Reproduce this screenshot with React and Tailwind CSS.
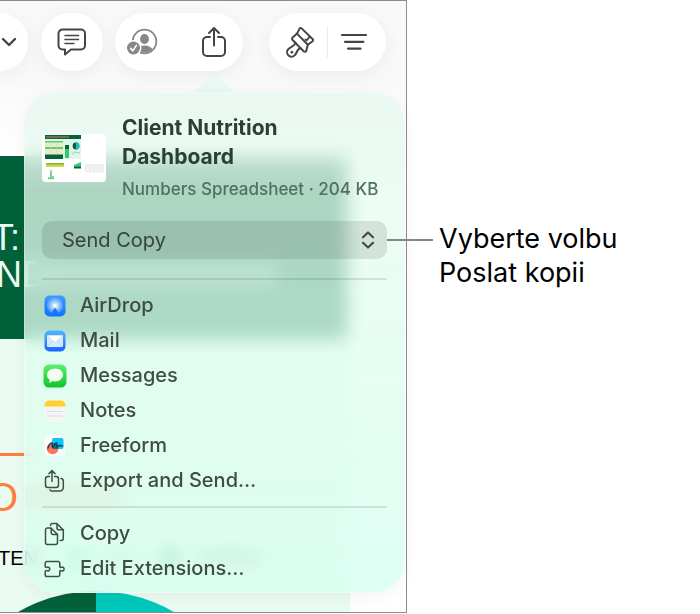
import React from "react";

const stroke = {
  fill: "none",
  stroke: "currentColor",
  strokeLinecap: "round",
  strokeLinejoin: "round",
};

function ChevronIcon() {
  return (
    <svg width="16" height="10" viewBox="0 0 16 10" {...stroke} strokeWidth="2.4">
      <path d="M2 2 L8 8 L14 2" />
    </svg>
  );
}

function CommentIcon() {
  return (
    <svg width="32" height="30" viewBox="0 0 32 30" {...stroke} strokeWidth="2">
      <path d="M6.5 2.5 H25 A4 4 0 0 1 29 6.5 V18.5 A4 4 0 0 1 25 22.5 H15 L9 27.5 V22.5 H6.5 A4 4 0 0 1 2.5 18.5 V6.5 A4 4 0 0 1 6.5 2.5 Z" />
      <path strokeWidth="1.5" d="M9 8.5 H22.5 M9 12.5 H22.5 M9 16.5 H18" />
    </svg>
  );
}

function CollaborateIcon() {
  return (
    <svg width="32" height="28" viewBox="0 0 32 28">
      <clipPath id="person">
        <circle cx="18.5" cy="13.5" r="11" />
      </clipPath>
      <circle cx="18.5" cy="13.5" r="11.8" fill="none" stroke="#86868b" strokeWidth="1.8" />
      <g clipPath="url(#person)" fill="#86868b">
        <ellipse cx="18.5" cy="11" rx="4.4" ry="5" />
        <ellipse cx="18.5" cy="25" rx="9.5" ry="7.5" />
      </g>
      <circle cx="7.5" cy="20" r="8" fill="#fff" />
      <circle cx="7.5" cy="20" r="6.5" fill="#86868b" />
      <path d="M4.6 20.4 L6.8 22.8 L10.4 17.4" fill="none" stroke="#fff" strokeWidth="1.6" strokeLinecap="round" strokeLinejoin="round" />
    </svg>
  );
}

function ShareIcon() {
  return (
    <svg width="26" height="32" viewBox="0 0 26 32" {...stroke} strokeWidth="2">
      <path d="M9 11 H6 A4 4 0 0 0 2 15 V26 A4 4 0 0 0 6 30 H20 A4 4 0 0 0 24 26 V15 A4 4 0 0 0 20 11 H17" />
      <path d="M13 19.5 V2.5 M8 7 L13 2 L18 7" />
    </svg>
  );
}

function BrushIcon() {
  return (
    <svg width="30" height="32" viewBox="0 0 30 32" {...stroke} strokeWidth="2">
      <path d="M16.5 1.8 L28.3 13.6 L24 18.2 L12.2 6.4 Z" stroke="none" />
      <path d="M12 7.6 L14.6 2.6 A1.2 1.2 0 0 1 16.6 2.4 L27.8 13.2 A1.4 1.4 0 0 1 27.6 15.2 L22.8 18.8" />
      <path d="M24.8 10.6 L21.6 14.4 L20.4 13.6" strokeWidth="1.8" />
      <path d="M12 7.6 L7.6 11.4 A1.8 1.8 0 0 0 7.6 14 L18.6 25.2 A1.8 1.8 0 0 0 21.2 25 L22.8 18.8 Z" />
      <path d="M10.4 16.8 C10 20 6 20.2 3.4 23 A4.4 4.4 0 0 0 9.6 29.4 C12.6 26.6 11.6 22.8 15.6 22.2" />
      <circle cx="6.8" cy="26.2" r="1" fill="currentColor" strokeWidth="1" />
    </svg>
  );
}

function FilterIcon() {
  return (
    <svg width="28" height="18" viewBox="0 0 28 18" {...stroke} strokeWidth="2.2">
      <path d="M2 2 H26 M5 8.8 H23.4 M8 15.6 H20.6" />
    </svg>
  );
}

function AirDropIcon() {
  return (
    <svg width="22" height="22" viewBox="0 0 22 22">
      <defs>
        <linearGradient id="airdrop" x1="0" y1="0" x2="0" y2="1">
          <stop offset="0" stopColor="#3f9bff" />
          <stop offset="1" stopColor="#0a74ff" />
        </linearGradient>
      </defs>
      <rect x="0.5" y="0.5" width="21" height="21" rx="5" fill="url(#airdrop)" />
      <circle cx="11" cy="10.8" r="7.8" fill="#fff" opacity=".3" />
      <circle cx="11" cy="10.8" r="5.4" fill="#fff" opacity=".35" />
      <circle cx="11" cy="10.8" r="3.2" fill="#fff" opacity=".4" />
      <path d="M11 12.5 L6.5 19.4 H15.5 Z" fill="#137aff" />
      <circle cx="11" cy="10.8" r="1.8" fill="#fff" />
    </svg>
  );
}

function MailIcon() {
  return (
    <svg width="22" height="22" viewBox="0 0 22 22">
      <defs>
        <linearGradient id="mail" x1="0" y1="0" x2="0" y2="1">
          <stop offset="0" stopColor="#4fb8fb" />
          <stop offset="1" stopColor="#1a63ff" />
        </linearGradient>
      </defs>
      <rect x="0.5" y="0.5" width="21" height="21" rx="5" fill="url(#mail)" />
      <rect x="3" y="5" width="16" height="12" rx="1.6" fill="#d9eaff" />
      <path d="M3.4 16.6 L9 10.8 M18.6 16.6 L13 10.8" stroke="#b3d2f8" strokeWidth="0.8" />
      <path d="M3.2 5.4 L9.6 11.6 Q11 12.8 12.4 11.6 L18.8 5.4 Z" fill="#fff" stroke="#b3d2f8" strokeWidth=".6" />
    </svg>
  );
}

function MessagesIcon() {
  return (
    <svg width="24" height="24" viewBox="0 0 24 24">
      <defs>
        <linearGradient id="messages" x1="0" y1="0" x2="0" y2="1">
          <stop offset="0" stopColor="#5cf06c" />
          <stop offset="1" stopColor="#12c22c" />
        </linearGradient>
      </defs>
      <rect x="0.5" y="0.5" width="23" height="23" rx="5.5" fill="url(#messages)" />
      <path d="M12 4.6 C16.6 4.6 20 7.4 20 11 C20 14.6 16.6 17.4 12 17.4 C11 17.4 10 17.3 9.2 17 C8.4 17.9 7.2 18.6 5.8 18.7 C6.5 17.8 6.8 16.8 6.7 15.8 C5 14.7 4 13 4 11 C4 7.4 7.4 4.6 12 4.6 Z" fill="#f3fff3" />
    </svg>
  );
}

function NotesIcon() {
  return (
    <svg width="22" height="22" viewBox="0 0 22 22">
      <clipPath id="notes">
        <rect x="0.5" y="0.5" width="21" height="21" rx="5" />
      </clipPath>
      <g clipPath="url(#notes)">
        <rect width="22" height="22" fill="#f5f5f6" />
        <rect width="22" height="6.5" fill="#ffd02f" />
        <path d="M3 11.5 H19 M3 16 H19" stroke="#dcdcdf" strokeWidth="1" />
      </g>
    </svg>
  );
}

function FreeformIcon() {
  return (
    <svg width="22" height="22" viewBox="0 0 22 22">
      <rect x="0.5" y="0.5" width="21" height="21" rx="5" fill="#fbfbfb" />
      <rect x="8" y="3" width="11.5" height="11" rx="2" fill="#12c3f5" />
      <circle cx="8.6" cy="13.4" r="5.8" fill="#ff7350" />
      <path d="M8 8 H11 A6 6 0 0 1 14.2 14 H10 A2 2 0 0 1 8 12 Z" fill="#0b6f94" />
      <path d="M3.8 13.2 C6 7 8.8 6.6 8.2 9.8 C7.6 13.4 9.6 12.6 11 9.4 C12.6 6.6 13.4 8 12.8 10.6 C12.6 13 14.4 11.8 15.4 10.2 C16.4 9.6 16.4 12 18.6 10.8" {...stroke} stroke="#073b55" strokeWidth="1.3" />
    </svg>
  );
}

function ExportIcon() {
  return (
    <svg width="22" height="24" viewBox="0 0 22 24" {...stroke} strokeWidth="1.5">
      <path d="M5.5 7.5 H4 A2.5 2.5 0 0 0 1.5 10 V16 A2.5 2.5 0 0 0 4 18.5 H12 A2.5 2.5 0 0 0 14.5 16 V10 A2.5 2.5 0 0 0 12 7.5 H10.5" />
      <path d="M8 12.5 V2 M5 4.6 L8 1.6 L11 4.6" />
      <path d="M17 9.5 A2.5 2.5 0 0 1 19.3 12 V18.5 A3.5 3.5 0 0 1 15.8 22 H8.5 A2.5 2.5 0 0 1 6 20.8" />
    </svg>
  );
}

function CopyIcon() {
  return (
    <svg width="22" height="24" viewBox="0 0 22 24" {...stroke} strokeWidth="1.5">
      <path d="M3.500 6 H7 L13.500 12.500 V20.500 A2 2 0 0 1 11.500 22.500 H3.500 A2 2 0 0 1 1.500 20.500 V8 A2 2 0 0 1 3.500 6 Z" />
      <path d="M7.2 6.4 V10.6 A1.8 1.8 0 0 0 9 12.4 H13.2" />
      <path d="M6.5 3.4 A2 2 0 0 1 8.3 1.5 H12.8 L19.3 8 V16.5 A2 2 0 0 1 17.3 18.5 H16.2" />
      <path d="M13 1.8 V6 A1.8 1.8 0 0 0 14.8 7.8 H19" />
    </svg>
  );
}

function ExtensionIcon() {
  return (
    <svg width="22" height="18" viewBox="0 0 22 18" {...stroke} strokeWidth="1.5">
      <path d="M3 1.5 H14 A1.8 1.8 0 0 1 15.8 3.3 V6.4 C15.8 7.8 17 7.6 17.6 7.2 A1.900 1.900 0 1 1 17.600 10.800 C17 10.400 15.800 10.200 15.800 11.600 V14.7 A1.8 1.8 0 0 1 14 16.5 H3 A1.8 1.8 0 0 1 1.2 14.7 V11.8 C1.2 10.400 2.400 10.400 3.200 10.800 A1.900 1.900 0 1 0 3.200 7.200 C2.400 7.600 1.200 7.600 1.200 6.200 V3.3 A1.8 1.8 0 0 1 3 1.5 Z" />
    </svg>
  );
}

function Thumbnail() {
  return (
    <svg width="64" height="48" viewBox="0 0 64 48" className="shrink-0 rounded bg-white">
      <rect x="3" y="1" width="36" height="24" fill="#dff5e8" />
      <rect x="3" y="1" width="36" height="4" fill="#06623c" />
      <path d="M4 3 H27" stroke="#d9824a" strokeWidth="1" />
      <rect x="3" y="7" width="18" height="6" fill="#ece9c4" />
      <rect x="3" y="13" width="18" height="2" fill="#4fd37b" />
      <rect x="3" y="15" width="18" height="5" fill="#ece9c4" />
      <rect x="3" y="7" width="18" height="1.5" fill="#4fd37b" />
      <rect x="3" y="20.500" width="18" height="4.500" fill="#06623c" />
      <path d="M9 9 V20 M15 9 V20" stroke="#bfe0bf" strokeWidth=".6" />
      <rect x="23" y="11" width="4" height="13" fill="#35c96a" />
      <rect x="23" y="11" width="4" height="4" fill="#06623c" />
      <circle cx="34" cy="12" r="3.4" fill="#06623c" />
      <path d="M34 8.6 A3.4 3.4 0 0 1 34 15.4 Z" fill="#17c6ba" />
      <path d="M30 20 L33 18 L38 19" stroke="#7bcf9b" strokeWidth=".8" fill="none" />
      <rect x="4" y="29" width="18" height="4" fill="#d8d845" />
      <path d="M4 29.8 H22" stroke="#56b93d" strokeWidth="1.2" />
      <path d="M32 34 V31 L39 28 V34 Z" fill="#37d07a" />
      <rect x="32" y="32.5" width="7" height="2" fill="#06623c" />
      <path d="M7 36 H11 M6 45 H12" stroke="#bfbfbf" strokeWidth=".7" />
      <path d="M9 37 V45 M11 42 V45 M7 43 V45" stroke="#2fc352" strokeWidth="1.3" />
      <rect x="43" y="30" width="19" height="8.5" fill="#ededee" />
      <path d="M46 31 V38 M50 31 V38 M54 31 V38 M58 31 V38 M51 29 H54" stroke="#fff" strokeWidth=".7" />
    </svg>
  );
}

const apps = [
  ["AirDrop", AirDropIcon],
  ["Mail", MailIcon],
  ["Messages", MessagesIcon],
  ["Notes", NotesIcon],
  ["Freeform", FreeformIcon],
  ["Export and Send…", ExportIcon],
];

const actions = [
  ["Copy", CopyIcon],
  ["Edit Extensions…", ExtensionIcon],
];

function ActionList({ items }) {
  return (
    <ul>
      {items.map(([label, Icon]) => (
        <li key={label}>
          <button type="button" className="flex h-[35px] w-full items-center gap-3 text-left font-medium">
            <span className="flex w-[26px] shrink-0 justify-center">
              <Icon />
            </span>
            {label}
          </button>
        </li>
      ))}
    </ul>
  );
}

function Toolbar() {
  const pill = "flex h-[58px] items-center bg-white shadow-[0_4px_20px_rgba(0,0,0,0.06)]";
  return (
    <header className="flex h-[155px] items-start bg-linear-to-b from-[#f9f9f9] from-50% to-white pt-3 text-[#454545]">
      <div className={`${pill} w-7 rounded-r-full`}>
        <button type="button" aria-label="Zoom" className="ml-px">
          <ChevronIcon />
        </button>
      </div>
      <div className={`${pill} ml-[13px] w-[62px] justify-center rounded-full`}>
        <button type="button" aria-label="Comment">
          <CommentIcon />
        </button>
      </div>
      <div className={`${pill} ml-3 w-[128px] justify-between rounded-full pr-4 pl-[11px]`}>
        <button type="button" aria-label="Collaborate">
          <CollaborateIcon />
        </button>
        <button type="button" aria-label="Share">
          <ShareIcon />
        </button>
      </div>
      <div className={`${pill} ml-[26px] w-[117px] justify-between rounded-full pr-[18px] pl-4`}>
        <button type="button" aria-label="Format">
          <BrushIcon />
        </button>
        <span className="h-8 w-px bg-[#ececec]" />
        <button type="button" aria-label="Organize">
          <FilterIcon />
        </button>
      </div>
    </header>
  );
}

function Sheet() {
  return (
    <div className="w-[350px] bg-[#eafbf1] font-['Liberation_Sans',Arial,sans-serif]">
      <div className="-ml-2 h-[183px] w-[355px] bg-[#00613a] pt-[63px] text-[36px] leading-[37px] text-[#eafbf1]">
        <p>T:</p>
        <p className="flex items-center pl-1">
          ND
          <span className="h-6 w-[230px] bg-white/30" />
        </p>
      </div>
      <div className="mt-[114px] h-[3px] w-[330px] bg-linear-to-r from-[#ff7e3a] from-10% to-transparent to-10%" />
      <p className="-ml-[13px] flex h-[82px] items-center text-[40px] text-[#ff7e3a]">
        O<span className="ml-2 h-6 w-24 bg-[#ff7e3a]/35" />
      </p>
      <p className="-ml-0.5 flex h-10 items-center text-xl text-black">
        TEN
        <span className="ml-8 size-4 rounded-full bg-[#35e05a]" />
        <span className="ml-4 h-2 w-9 bg-black/20" />
        <span className="ml-6 size-4 rounded-full bg-[#00613a]" />
        <span className="ml-5 h-3 w-16 bg-black/30" />
      </p>
      <svg width="350" height="34" viewBox="0 0 350 34" className="block">
        <path d="M96 168 V13 A155 155 0 0 0 -59 168 Z" fill="#00613a" />
        <path d="M96 168 V13 A155 155 0 0 1 251 168 Z" fill="#00c8b9" />
      </svg>
    </div>
  );
}

function SharePopover() {
  return (
    <div className="absolute top-[75px] left-6 w-[381px]">
      <svg width="381" height="17" viewBox="0 0 381 17" className="block">
        <path d="M166 17 C174 17 176 12 183 5 Q190.500 -3 198 5 C205 12 207 17 215 17 Z" fill="#e9f8f0" />
      </svg>
      <div
        role="dialog"
        aria-label="Share"
        className="rounded-[32px] border border-white/30 bg-linear-to-b from-[#e8f8f0]/90 from-5% via-[#e6fcf0]/75 via-20% to-[#d6fff0]/80 px-[17px] pt-5 pb-1.5 text-[20px] leading-[29px] text-[#404c46] shadow-[0_4px_16px_rgba(0,60,40,0.05)] backdrop-blur-[9px]"
      >
        <div className="flex items-center gap-4">
          <Thumbnail />
          <div>
            <h2 className="text-[21px] font-bold text-[#2b4035]">
              Client Nutrition
              <br />
              Dashboard
            </h2>
            <p className="mt-1.5 text-[17px] leading-[25px] font-medium whitespace-nowrap text-[#52705f]">Numbers Spreadsheet · 204 KB</p>
          </div>
        </div>
        <div className="relative mt-[19px]">
          <select
            aria-label="Sharing mode"
            className="block h-[38px] w-full appearance-none rounded-[10px] bg-black/10 px-5 text-[20px] text-[#35443c]"
          >
            <option>Send Copy</option>
          </select>
          <svg width="14" height="18" viewBox="0 0 14 18" {...stroke} strokeWidth="2.2" className="pointer-events-none absolute top-2.5 right-3">
            <path d="M2 6.200 L7 1.500 L12 6.200 M2 11.800 L7 16.500 L12 11.800" />
          </svg>
        </div>
        <hr className="mt-[19px] mb-2 border-t-2 border-black/10" />
        <ActionList items={apps} />
        <hr className="my-2 border-t-2 border-black/10" />
        <ActionList items={actions} />
      </div>
    </div>
  );
}

export default function App() {
  return (
    <main className="flex items-start bg-white font-[Inter,'Noto_Sans',sans-serif]">
      <div className="relative w-[407px] shrink-0">
        <section className="overflow-hidden border-t border-r border-b border-[#8c8c8c] bg-white">
          <Toolbar />
          <Sheet />
        </section>
        <SharePopover />
        <span className="absolute top-[239px] left-[387px] h-0.5 w-[46px] bg-[#868686]" />
      </div>
      <p className="mt-[222px] ml-8 max-w-[200px] flex-1 text-[27px] leading-[34px] text-black">Vyberte volbu Poslat kopii</p>
    </main>
  );
}
